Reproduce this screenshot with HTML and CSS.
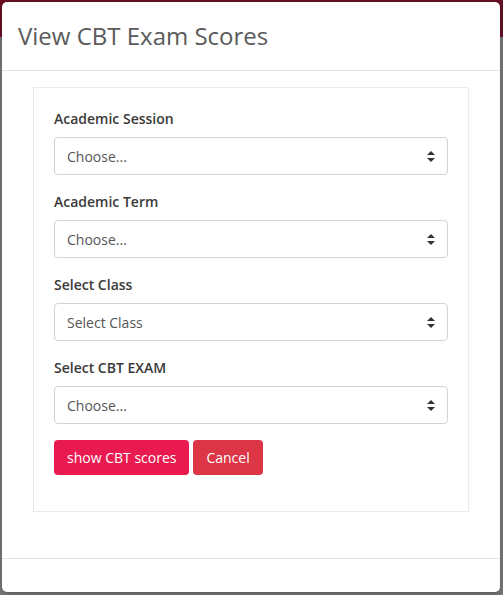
FILE: index.html
```html
<!DOCTYPE html>
<html>
<head>
<meta charset="utf-8">
<link rel="stylesheet" href="styles.css">
</head>
<body>
<div class="modal">
  <div class="modal-header">
    <h4 class="modal-title">View CBT Exam Scores</h4>
  </div>
  <div class="modal-body">
    <div class="card">
      <div class="form-group">
        <label class="label">Academic Session</label>
        <div class="select"><span>Choose...</span><svg class="caret" width="8" height="11" viewBox="0 0 8 11"><path d="M4 0 L8 4 L0 4 Z M0 7 L8 7 L4 11 Z" fill="#333"/></svg></div>
      </div>
      <div class="form-group">
        <label class="label">Academic Term</label>
        <div class="select"><span>Choose...</span><svg class="caret" width="8" height="11" viewBox="0 0 8 11"><path d="M4 0 L8 4 L0 4 Z M0 7 L8 7 L4 11 Z" fill="#333"/></svg></div>
      </div>
      <div class="form-group">
        <label class="label">Select Class</label>
        <div class="select"><span>Select Class</span><svg class="caret" width="8" height="11" viewBox="0 0 8 11"><path d="M4 0 L8 4 L0 4 Z M0 7 L8 7 L4 11 Z" fill="#333"/></svg></div>
      </div>
      <div class="form-group">
        <label class="label">Select CBT EXAM</label>
        <div class="select"><span>Choose...</span><svg class="caret" width="8" height="11" viewBox="0 0 8 11"><path d="M4 0 L8 4 L0 4 Z M0 7 L8 7 L4 11 Z" fill="#333"/></svg></div>
      </div>
      <div class="actions">
        <button class="btn btn-primary">show CBT scores</button>
        <button class="btn btn-danger">Cancel</button>
      </div>
    </div>
  </div>
  <div class="modal-footer"></div>
</div>
</body>
</html>
```
FILE: styles.css
```css
html, body {
  margin: 0;
  padding: 0;
}
body {
  width: 503px;
  height: 595px;
  box-sizing: border-box;
  padding: 2px 3px 3px 2px;
  background: linear-gradient(to bottom, #6b0f25 0, #6b0f25 37px, #7b7b7b 37px, #7b7b7b 100%);
  font-family: "Open Sans", "Liberation Sans", sans-serif;
  overflow: hidden;
}
.modal {
  background: #fff;
  border-radius: 5px;
  height: 590px;
  display: flex;
  flex-direction: column;
  box-shadow: 0 2px 6px rgba(0,0,0,0.3);
}
.modal-header {
  padding: 16px 16px 16px 16px;
  border-bottom: 1px solid #e5e5e5;
}
.modal-title {
  margin: 0;
  font-size: 24px;
  font-weight: 400;
  line-height: 36px;
  color: #5a5a5a;
}
.modal-body {
  padding: 16px 31px 46px 31px;
}
.card {
  border: 1px solid #ebebeb;
  padding: 20px 20px 36px 20px;
}
.form-group {
  margin-bottom: 16px;
}
.label {
  display: block;
  font-size: 14px;
  font-weight: 600;
  line-height: 21px;
  color: #3a3a3a;
  margin-bottom: 8px;
}
.select {
  height: 38px;
  box-sizing: border-box;
  border: 1px solid #ced4da;
  border-radius: 4px;
  display: flex;
  align-items: center;
  justify-content: space-between;
  padding: 0 12px 0 12px;
  font-size: 14px;
  color: #555;
}
.caret {
  display: block;
}
.actions {
  display: flex;
  gap: 4px;
}
.btn {
  font-family: inherit;
  font-size: 14px;
  line-height: 21px;
  color: #fff;
  border: none;
  border-radius: 4px;
  padding: 7px 13px 7px 13px;
}
.btn-primary {
  background: #e91a4f;
}
.btn-danger {
  background: #dc3545;
}
.modal-footer {
  flex: 1;
  border-top: 1px solid #e5e5e5;
}
```
